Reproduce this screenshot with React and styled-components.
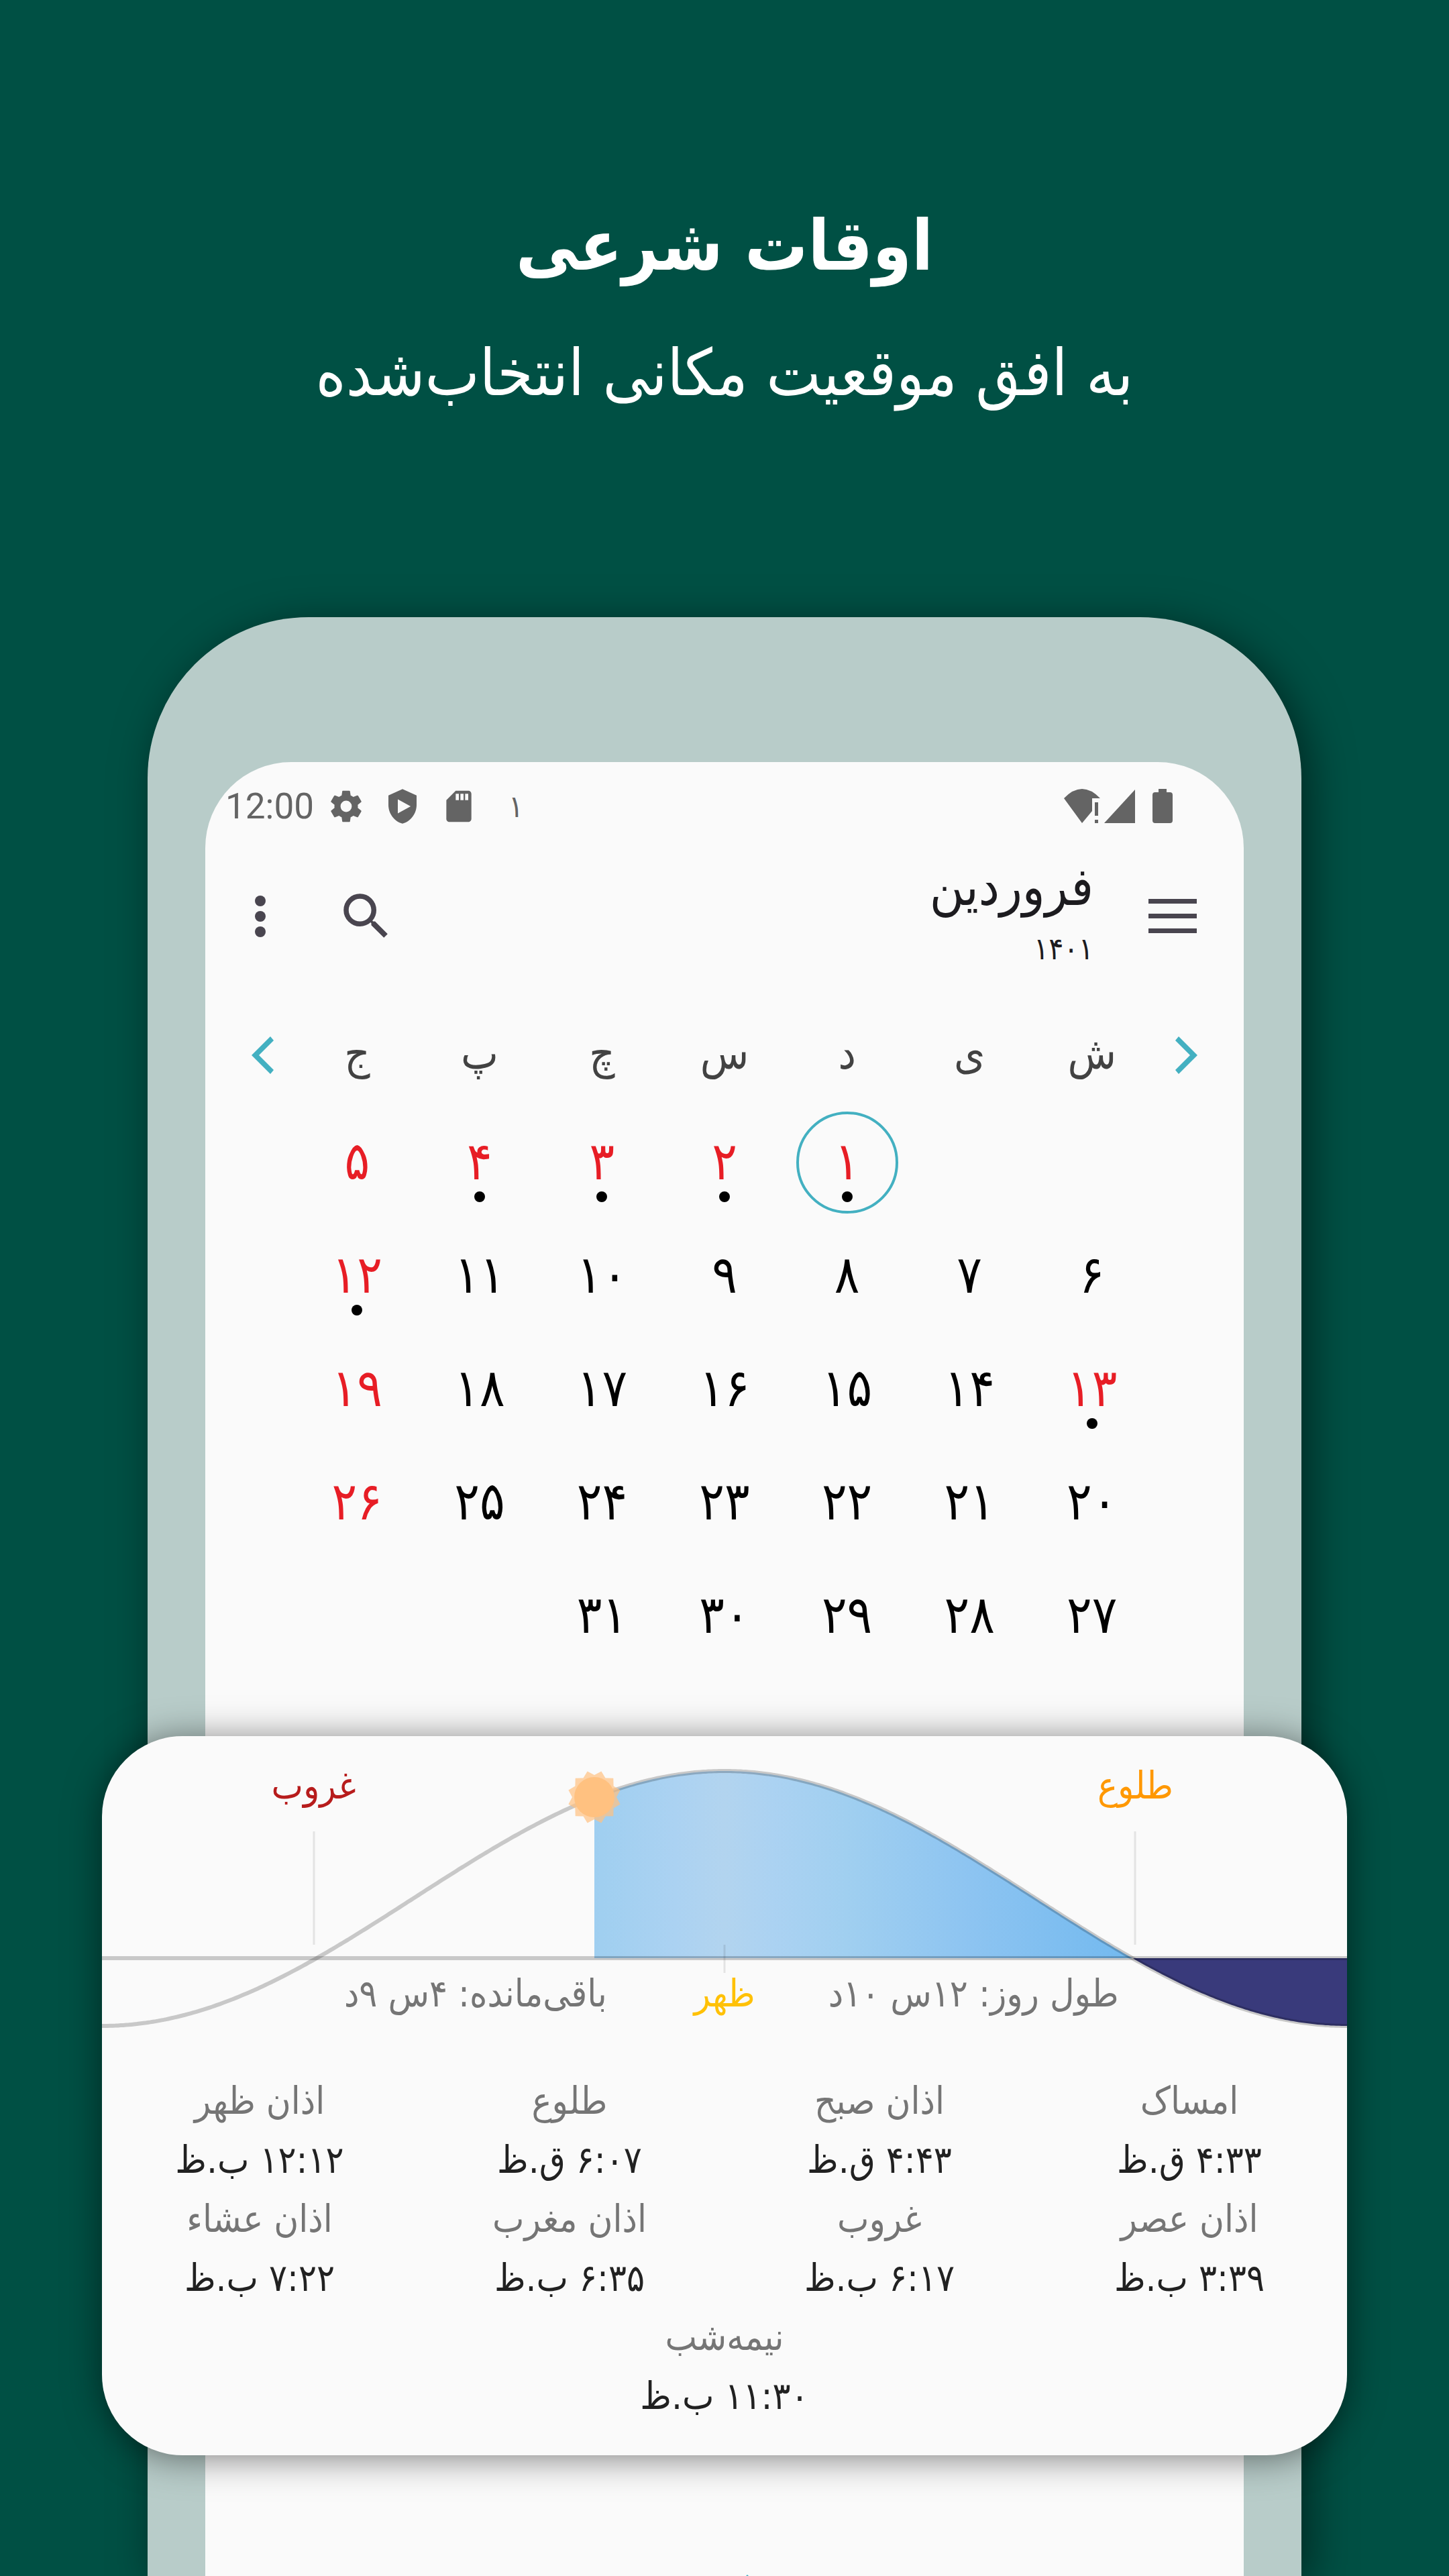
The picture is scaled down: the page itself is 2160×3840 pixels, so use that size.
import React from "react";
import styled, { createGlobalStyle } from "styled-components";

const GlobalStyle = createGlobalStyle`
  * { box-sizing: border-box; }
  body {
    margin: 0;
    background: #005044;
    font-family: "DejaVu Sans Condensed", "DejaVu Sans", sans-serif;
  }
`;

const Page = styled.main`
  direction: rtl;
  height: 100vh;
  overflow: hidden;
  display: flex;
  flex-direction: column;
  background: #005044;
`;

const Hero = styled.header`
  height: 920px;
  flex: none;
  padding-top: 276px;
  color: #fff;
  text-align: center;
`;

const Title = styled.h1`
  margin: 0;
  font-size: 104px;
  line-height: 180px;
  font-weight: 700;
`;

const Subtitle = styled.p`
  margin: 0;
  font-size: 96px;
  line-height: 200px;
`;

const Phone = styled.section`
  flex: 1 0 auto;
  display: flex;
  flex-direction: column;
  margin: 0 220px;
  padding: 216px 86px 0;
  border-radius: 240px 240px 0 0;
  background: #b8ccc9;
  box-shadow: 12px 12px 64px rgba(0, 0, 0, 0.5);
`;

const Screen = styled.div`
  flex: 1;
  display: flex;
  flex-direction: column;
  border-radius: 128px 128px 0 0;
  background: #fafafa;
`;

const StatusBar = styled.div`
  direction: ltr;
  display: flex;
  align-items: center;
  height: 132px;
  padding: 0 106px 0 30px;
  color: #646464;
`;

const Clock = styled.time`
  margin-right: 20px;
  font: 400 53px/64px Roboto, sans-serif;
`;

const StatusIcon = styled.svg`
  flex: none;
  width: ${(p) => p.$w}px;
  height: 56px;
  margin-right: ${(p) => p.$gap}px;
  fill: currentColor;
`;

const StatusDay = styled.span`
  flex: 1;
  font-size: 46px;
`;

const Toolbar = styled.div`
  display: flex;
  align-items: center;
  height: 196px;
  padding: 0 58px 0 34px;
`;

const IconButton = styled.button`
  display: flex;
  align-items: center;
  justify-content: center;
  width: 96px;
  height: 120px;
  padding: 0;
  border: 0;
  background: none;
  color: ${(p) => p.$color || "#49454f"};
  fill: currentColor;
`;

const Actions = styled.div`
  display: flex;
  gap: 62px;
`;

const MonthTitle = styled.div`
  flex: 1;
  padding-right: 70px;
  color: #1c1b1f;
`;

const Month = styled.h2`
  margin: 0;
  font-size: 78px;
  font-weight: 400;
  line-height: 96px;
`;

const Year = styled.p`
  margin: 0;
  font-size: 46px;
  line-height: 88px;
`;

const Calendar = styled.div`
  display: flex;
  align-items: flex-start;
  padding: 30px 36px 0;
  margin-bottom: 95px;
`;

const NavButton = styled(IconButton)`
  width: 99px;
  height: 158px;
`;

const MonthTable = styled.table`
  flex: 1;
  table-layout: fixed;
  border-collapse: collapse;
`;

const Weekday = styled.th`
  height: 154px;
  padding: 0;
  color: #424242;
  font-size: 66px;
  font-weight: 400;
  line-height: 80px;
`;

const DayCell = styled.td`
  height: 169px;
  padding: 0;
`;

const Day = styled.button`
  position: relative;
  display: flex;
  align-items: center;
  justify-content: center;
  width: 152px;
  height: 152px;
  margin: 0 auto;
  padding: 0 0 4px;
  border: 4px solid ${(p) => (p.$today ? "#43b0c1" : "transparent")};
  border-radius: 50%;
  background: none;
  color: ${(p) => (p.$holiday ? "#e71d25" : "#000")};
  font-family: inherit;
  font-size: 78px;
  line-height: 96px;
`;

const EventDot = styled.span`
  position: absolute;
  bottom: 13px;
  left: 50%;
  width: 16px;
  height: 16px;
  margin-left: -8px;
  border-radius: 50%;
  background: #000;
`;

const Card = styled.section`
  margin: 0 -154px;
  padding-bottom: 44px;
  border-radius: 120px;
  background: #fafafa;
  box-shadow: 0 4px 54px rgba(0, 0, 0, 0.5);
`;

const SunChart = styled.div`
  position: relative;
`;

const Curve = styled.svg`
  display: block;
  width: 100%;
  height: 500px;
`;

const ChartLabel = styled.span`
  position: absolute;
  top: ${(p) => p.$top}px;
  left: ${(p) => p.$at}%;
  transform: translateX(-50%);
  white-space: nowrap;
  color: ${(p) => p.$color};
  font-size: 56px;
  line-height: 80px;
`;

const Times = styled.dl`
  display: flex;
  flex-wrap: wrap;
  justify-content: center;
  margin: 0;
  padding: 0 4px;
`;

const Time = styled.div`
  width: 25%;
  text-align: center;
  font-size: 56px;
  line-height: 88px;
`;

const TimeName = styled.dt`
  color: #757575;
`;

const TimeValue = styled.dd`
  margin: 0;
  color: #212121;
`;

const Footer = styled.div`
  flex: 1;
  display: flex;
  align-items: flex-end;
  justify-content: center;
  padding-left: 68px;
`;

const weekdays = ["ش", "ی", "د", "س", "چ", "پ", "ج"];
const holidays = [1, 2, 3, 4, 5, 12, 13, 19, 26];
const events = [1, 2, 3, 4, 12, 13];
const fa = (n) => String(n).replace(/\d/g, (d) => "۰۱۲۳۴۵۶۷۸۹"[d]);
const weeks = [0, 1, 2, 3, 4].map((w) =>
  weekdays.map((_, d) => w * 7 + d - 1).map((n) => (n > 0 && n < 32 ? n : null))
);

const times = [
  ["امساک", "۴:۳۳ ق.ظ"],
  ["اذان صبح", "۴:۴۳ ق.ظ"],
  ["طلوع", "۶:۰۷ ق.ظ"],
  ["اذان ظهر", "۱۲:۱۲ ب.ظ"],
  ["اذان عصر", "۳:۳۹ ب.ظ"],
  ["غروب", "۶:۱۷ ب.ظ"],
  ["اذان مغرب", "۶:۳۵ ب.ظ"],
  ["اذان عشاء", "۷:۲۲ ب.ظ"],
  ["نیمه‌شب", "۱۱:۳۰ ب.ظ"],
];

const curveY = (x) => 242 - 190 * Math.cos(((x - 928) / 928) * Math.PI);
const curve = (from, to) => {
  const pts = [];
  for (let x = from; x <= to; x += 4) pts.push(`${x} ${curveY(x).toFixed(1)}`);
  return pts.join(" L");
};
const star = (points, outer, inner) =>
  Array.from({ length: points * 2 }, (_, i) => {
    const r = i % 2 ? inner : outer;
    const a = ((i + 1) * Math.PI) / points;
    return `${(734 + r * Math.sin(a)).toFixed(1)},${(91 + r * Math.cos(a)).toFixed(1)}`;
  }).join(" ");

export default function App() {
  return (
    <Page lang="fa">
      <GlobalStyle />
      <Hero>
        <Title>اوقات شرعی</Title>
        <Subtitle>به افق موقعیت مکانی انتخاب‌شده</Subtitle>
      </Hero>
      <Phone>
        <Screen>
          <StatusBar>
            <Clock>12:00</Clock>
            <StatusIcon $w={56} $gap={28} viewBox="0 0 24 24" aria-hidden="true">
              <path d="M19.430 12.980c.04-.32.07-.64.07-.98s-.03-.66-.07-.98l2.110-1.650c.19-.15.24-.42.12-.64l-2-3.460c-.12-.22-.39-.3-.61-.22l-2.490 1c-.52-.4-1.080-.73-1.690-.98l-.38-2.650A.488.488 0 0 0 14 2h-4c-.25 0-.46.18-.49.42l-.38 2.650c-.61.25-1.170.59-1.690.98l-2.490-1c-.23-.09-.49 0-.61.22l-2 3.460c-.13.22-.07.49.12.64l2.110 1.650c-.04.32-.07.65-.07.98s.03.66.07.98l-2.110 1.650c-.19.15-.24.42-.12.64l2 3.460c.12.22.39.3.61.22l2.490-1c.52.4 1.080.73 1.690.98l.38 2.650c.03.24.24.42.49.42h4c.25 0 .46-.18.49-.42l.38-2.650c.61-.25 1.170-.59 1.690-.98l2.490 1c.23.09.49 0 .61-.22l2-3.460c.12-.22.07-.49-.12-.64zM12 15.600A3.600 3.600 0 1 1 12 8.400a3.600 3.600 0 0 1 0 7.200z" />
            </StatusIcon>
            <StatusIcon $w={56} $gap={28} viewBox="0 0 24 24" aria-hidden="true">
              <path fillRule="evenodd" d="M12 1L3 5v6c0 5.550 3.840 10.740 9 12 5.160-1.260 9-6.450 9-12V5zM9 7.500l8.200 4.500-8.200 4.500z" />
            </StatusIcon>
            <StatusIcon $w={56} $gap={46} viewBox="0 0 24 24" aria-hidden="true">
              <path d="M18 2h-8L4.020 8 4 20c0 1.100.9 2 2 2h12c1.100 0 2-.9 2-2V4c0-1.100-.9-2-2-2zm-6 6h-2V4h2v4zm3 0h-2V4h2v4zm3 0h-2V4h2v4z" />
            </StatusIcon>
            <StatusDay>۱</StatusDay>
            <StatusIcon $w={54} $gap={6} viewBox="0 0 54 56" aria-hidden="true">
              <path d="M27 53L0 16Q27-12 54 16H42V35zM46 22h5v20h-5zM46 48h5v5h-5z" />
            </StatusIcon>
            <StatusIcon $w={46} $gap={26} viewBox="0 0 46 56" aria-hidden="true">
              <path d="M46 3V53H0z" />
            </StatusIcon>
            <StatusIcon $w={30} $gap={0} viewBox="0 0 30 56" aria-hidden="true">
              <path d="M9 2h12v5h5q4 0 4 4v38q0 4-4 4H4q-4 0-4-4V11q0-4 4-4h5z" />
            </StatusIcon>
          </StatusBar>

          <Toolbar>
            <IconButton aria-label="فهرست">
              <svg width="72" height="54" viewBox="0 0 72 54">
                <path d="M0 1h72v7H0zM0 23h72v7H0zM0 45h72v7H0z" />
              </svg>
            </IconButton>
            <MonthTitle>
              <Month>فروردین</Month>
              <Year>۱۴۰۱</Year>
            </MonthTitle>
            <Actions>
              <IconButton aria-label="جستجو">
                <svg width="90" height="90" viewBox="0 0 24 24">
                  <path d="M15.500 14h-.79l-.28-.27A6.471 6.471 0 0 0 16 9.500 6.500 6.500 0 1 0 9.500 16c1.610 0 3.090-.59 4.230-1.570l.27.28v.79l5 4.990L20.490 19l-4.990-5zm-6 0C7.010 14 5 11.990 5 9.500S7.010 5 9.500 5 14 7.010 14 9.500 11.990 14 9.500 14z" />
                </svg>
              </IconButton>
              <IconButton aria-label="گزینه‌های بیشتر">
                <svg width="16" height="64" viewBox="0 0 16 64">
                  <circle cx="8" cy="9" r="8" />
                  <circle cx="8" cy="32" r="8" />
                  <circle cx="8" cy="55" r="8" />
                </svg>
              </IconButton>
            </Actions>
          </Toolbar>

          <Calendar>
            <NavButton $color="#43b0c1" aria-label="ماه قبل">
              <svg width="33" height="56" viewBox="0 0 33 56">
                <path d="M5 0L33 28 5 56 0 50 22 28 0 6z" />
              </svg>
            </NavButton>
            <MonthTable>
              <thead>
                <tr>
                  {weekdays.map((d) => (
                    <Weekday key={d} scope="col">{d}</Weekday>
                  ))}
                </tr>
              </thead>
              <tbody>
                {weeks.map((week, w) => (
                  <tr key={w}>
                    {week.map((n, d) => (
                      <DayCell key={d}>
                        {n && (
                          <Day $today={n === 1} $holiday={holidays.includes(n)}>
                            {fa(n)}
                            {events.includes(n) && <EventDot />}
                          </Day>
                        )}
                      </DayCell>
                    ))}
                  </tr>
                ))}
              </tbody>
            </MonthTable>
            <NavButton $color="#43b0c1" aria-label="ماه بعد">
              <svg width="33" height="56" viewBox="0 0 33 56">
                <path d="M28 0L0 28 28 56 33 50 11 28 33 6z" />
              </svg>
            </NavButton>
          </Calendar>

          <Card>
            <SunChart>
              <Curve viewBox="0 0 1856 500" preserveAspectRatio="none" aria-hidden="true">
                <defs>
                  <linearGradient id="sky" gradientUnits="userSpaceOnUse" x1="319" x2="1537" y1="0" y2="0">
                    <stop offset="0" stopColor="#72b9ef" />
                    <stop offset="0.2" stopColor="#8dc4f1" />
                    <stop offset="0.35" stopColor="#a0cff0" />
                    <stop offset="0.44" stopColor="#abd2f2" />
                    <stop offset="0.5" stopColor="#b2d4ef" />
                    <stop offset="0.56" stopColor="#abd2f2" />
                    <stop offset="0.65" stopColor="#a0cff0" />
                    <stop offset="0.8" stopColor="#8dc4f1" />
                    <stop offset="1" stopColor="#72b9ef" />
                  </linearGradient>
                </defs>
                <path d={`M734 331 L${curve(734, 1537)} L1537 331z`} fill="url(#sky)" />
                <path d={`M1537 331 L${curve(1540, 1856)} V331z`} fill="#393a7b" />
                <g fill="none" stroke="#000" strokeOpacity="0.2">
                  <path d={`M${curve(0, 1856)}`} strokeWidth="6" />
                  <path d="M0 331H1856" strokeWidth="6" />
                  <path d="M316 142V311M1540 142V311M928 311V353" strokeWidth="3" strokeOpacity="0.09" />
                </g>
                <g fill="#ffc180">
                  <polygon points={star(12, 40, 33)} opacity="0.7" />
                  <circle cx="734" cy="91" r="30" />
                </g>
              </Curve>
              <ChartLabel $top={34} $at={17} $color="#b71c1c">غروب</ChartLabel>
              <ChartLabel $top={34} $at={83} $color="#ff9800">طلوع</ChartLabel>
              <ChartLabel $top={344} $at={50} $color="#ffc107">ظهر</ChartLabel>
              <ChartLabel $top={344} $at={30} $color="#757575">باقی‌مانده: ۴س ۹د</ChartLabel>
              <ChartLabel $top={344} $at={70} $color="#757575">طول روز: ۱۲س ۱۰د</ChartLabel>
            </SunChart>
            <Times>
              {times.map(([name, value]) => (
                <Time key={name}>
                  <TimeName>{name}</TimeName>
                  <TimeValue>{value}</TimeValue>
                </Time>
              ))}
            </Times>
          </Card>
          <Footer>
            <svg width="4" height="2" viewBox="0 0 4 2" aria-hidden="true">
              <path d="M2 0L4 2H0z" fill="#43b0c1" />
            </svg>
          </Footer>
        </Screen>
      </Phone>
    </Page>
  );
}
